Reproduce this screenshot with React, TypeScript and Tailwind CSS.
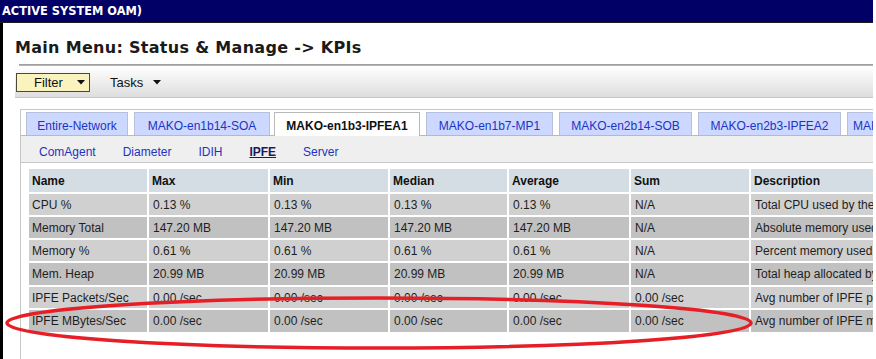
import React from "react";

const tabs = [
  { label: "Entire-Network", w: "w-[102px]", active: false },
  { label: "MAKO-en1b14-SOA", w: "w-[136px]", active: false },
  { label: "MAKO-en1b3-IPFEA1", w: "w-[146px]", active: true },
  { label: "MAKO-en1b7-MP1", w: "w-[127px]", active: false },
  { label: "MAKO-en2b14-SOB", w: "w-[133px]", active: false },
  { label: "MAKO-en2b3-IPFEA2", w: "w-[143px]", active: false },
  { label: "MAKO-en2b3-IPFEB1", w: "w-[130px]", active: false },
];

const subs = ["ComAgent", "Diameter", "IDIH", "IPFE", "Server"];

const headers = ["Name", "Max", "Min", "Median", "Average", "Sum", "Description"];

const rows: { h: string; cells: string[] }[] = [
  { h: "h-[21px]", cells: ["CPU %", "0.13 %", "0.13 %", "0.13 %", "0.13 %", "N/A", "Total CPU used by the IPFE process"] },
  { h: "h-[21px]", cells: ["Memory Total", "147.20 MB", "147.20 MB", "147.20 MB", "147.20 MB", "N/A", "Absolute memory used by the process"] },
  { h: "h-[21px]", cells: ["Memory %", "0.61 %", "0.61 %", "0.61 %", "0.61 %", "N/A", "Percent memory used by the process"] },
  { h: "h-[22px]", cells: ["Mem. Heap", "20.99 MB", "20.99 MB", "20.99 MB", "20.99 MB", "N/A", "Total heap allocated by the process"] },
  { h: "h-[21px]", cells: ["IPFE Packets/Sec", "0.00 /sec", "0.00 /sec", "0.00 /sec", "0.00 /sec", "0.00 /sec", "Avg number of IPFE packets per second"] },
  { h: "h-[22px]", cells: ["IPFE MBytes/Sec", "0.00 /sec", "0.00 /sec", "0.00 /sec", "0.00 /sec", "0.00 /sec", "Avg number of IPFE megabytes per second"] },
];

function Caret() {
  return (
    <svg width="8" height="5" viewBox="0 0 8 5" className="shrink-0">
      <polygon points="0,0 8,0 4,4.5" fill="#111" />
    </svg>
  );
}

export default function App() {
  const grid =
    "grid grid-cols-[118px_119px_118px_117px_120px_118px_200px] gap-x-[2px]";
  return (
    <div
      className="relative w-[876px] h-[359px] overflow-hidden bg-white"
      style={{ fontFamily: '"Liberation Sans", Arial, sans-serif' }}
    >
      <div className="w-[873px] h-full flex flex-col overflow-hidden">
        {/* top navy bar */}
        <div
          className="h-[23px] shrink-0 bg-[#000066] border-b border-[#1c1c1c] flex items-center pl-[2px] text-white font-bold text-[11.4px] leading-[23px] whitespace-nowrap"
          style={{ fontFamily: '"DejaVu Sans", Verdana, sans-serif' }}
        >
          ACTIVE SYSTEM OAM)
        </div>

        {/* body */}
        <div className="flex-1 border-l-[3px] border-black pl-[12px] flex flex-col min-h-0">
          <div
            className="mt-[15px] h-[20px] leading-[20px] text-[16px] font-bold tracking-[0.3px] text-[#1a1a1a] whitespace-nowrap"
            style={{ fontFamily: '"DejaVu Sans", Verdana, sans-serif' }}
          >
            Main Menu: Status &amp; Manage -&gt; KPIs
          </div>
          <div className="mt-[6px] ml-[4px] h-[2px] bg-[#b4b4b4] border-t border-[#a0a0a0]" />

          {/* toolbar */}
          <div className="h-[32px] shrink-0 bg-gradient-to-b from-[#ffffff] to-[#dedede] border-b border-[#c6c6c6] flex items-center pl-[1px] text-[13px] text-[#111]">
            <div className="w-[74px] h-[19px] bg-[#faf3bd] border border-[#4a4a3a] flex items-center pl-[17px] mt-[2px]">
              <span className="leading-[15px]">Filter</span>
              <span className="ml-[14px] flex items-center">
                <Caret />
              </span>
            </div>
            <div className="ml-[20px] flex items-center mt-[2px]">
              <span className="leading-[15px]">Tasks</span>
              <span className="ml-[10px] flex items-center">
                <Caret />
              </span>
            </div>
          </div>

          {/* tab container */}
          <div className="mt-[11px] ml-[5px] flex-1 border-l border-t border-[#c8c8c8] flex flex-col min-h-0">
            <div className="pt-[2px] pl-[5px] flex gap-[6px] border-b border-[#b9b9b9] whitespace-nowrap text-[12px]">
              {tabs.map((t) =>
                t.active ? (
                  <div
                    key={t.label}
                    className={`${t.w} shrink-0 -ml-[2px] h-[24px] -mb-[1px] bg-white border-l border-r border-t border-[#b9b9b9] text-center pt-[6px] leading-[14px] font-bold text-[#111]`}
                  >
                    {t.label}
                  </div>
                ) : (
                  <div
                    key={t.label}
                    className={`${t.w} shrink-0 h-[23px] bg-[#ccd8ff] border border-[#b6c0dc] border-b-0 text-center pt-[6px] leading-[14px] text-[#1d33c4] overflow-hidden`}
                  >
                    {t.label}
                  </div>
                )
              )}
            </div>

            {/* sub tabs */}
            <div className="h-[27px] shrink-0 bg-[#efefef] border-b border-[#c8c8c8] flex items-start pt-[9px] pl-[18px] gap-[27px] text-[12px] leading-[14px]">
              {subs.map((s) =>
                s === "IPFE" ? (
                  <span key={s} className="font-bold underline text-[#1a1a5e]">
                    {s}
                  </span>
                ) : (
                  <span key={s} className="text-[#1d33c4]">
                    {s}
                  </span>
                )
              )}
            </div>

            {/* table */}
            <div className="mt-[6px] ml-[8px] flex flex-col gap-y-[2px] text-[12px] whitespace-nowrap">
              <div className={grid}>
                {headers.map((h) => (
                  <div
                    key={h}
                    className="h-[23px] bg-[#d4dde4] flex items-center pl-[3px] font-bold text-[#111] overflow-hidden"
                  >
                    {h}
                  </div>
                ))}
              </div>
              {rows.map((r, i) => (
                <div key={i} className={grid}>
                  {r.cells.map((c, j) => (
                    <div
                      key={j}
                      className={`${r.h} ${
                        i % 2 === 0 ? "bg-[#d0d0d0]" : "bg-[#c1c1c1]"
                      } flex items-center ${j === 0 ? "pl-[3px]" : "pl-[4px]"} text-[#1e1e1e] overflow-hidden`}
                    >
                      {c}
                    </div>
                  ))}
                </div>
              ))}
            </div>
          </div>
        </div>
      </div>

      {/* red annotation ellipse */}
      <svg
        className="absolute left-0 top-0 pointer-events-none"
        width="876"
        height="359"
        viewBox="0 0 876 359"
      >
        <ellipse
          cx="379"
          cy="323"
          rx="372"
          ry="25"
          fill="none"
          stroke="#e61e26"
          strokeWidth="3.5"
        />
      </svg>
    </div>
  );
}
